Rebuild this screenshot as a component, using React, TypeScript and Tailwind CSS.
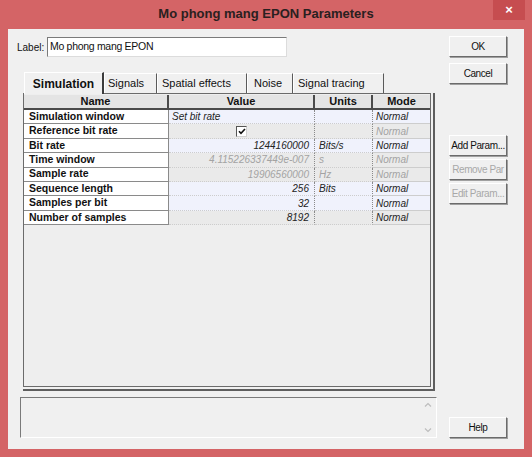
import React from 'react'

type Row = {
  name: string
  value: React.ReactNode
  align: 'left' | 'right' | 'center'
  units: string
  dim: boolean
  shade: boolean
}

const rows: Row[] = [
  { name: 'Simulation window', value: 'Set bit rate', align: 'left', units: '', dim: false, shade: false },
  { name: 'Reference bit rate', value: 'check', align: 'center', units: '', dim: true, shade: true },
  { name: 'Bit rate', value: '1244160000', align: 'right', units: 'Bits/s', dim: false, shade: false },
  { name: 'Time window', value: '4.115226337449e-007', align: 'right', units: 's', dim: true, shade: true },
  { name: 'Sample rate', value: '19906560000', align: 'right', units: 'Hz', dim: true, shade: true },
  { name: 'Sequence length', value: '256', align: 'right', units: 'Bits', dim: false, shade: false },
  { name: 'Samples per bit', value: '32', align: 'right', units: '', dim: false, shade: false },
  { name: 'Number of samples', value: '8192', align: 'right', units: '', dim: false, shade: true },
]

const tabs = [
  { label: 'Simulation', cls: 'w-[80px] justify-center' },
  { label: 'Signals', cls: 'w-[53px] pl-[3px]' },
  { label: 'Spatial effects', cls: 'w-[90px] pl-[4px]' },
  { label: 'Noise', cls: 'w-[46px] pl-[6px]' },
  { label: 'Signal tracing', cls: 'w-[91px] pl-[4px]' },
]

const font = { fontFamily: '"Liberation Sans", Arial, sans-serif' }

function WinButton({ label, disabled, className = '' }: { label: string; disabled?: boolean; className?: string }) {
  return (
    <div
      className={`w-[58px] h-[21px] flex items-center justify-center whitespace-nowrap bg-[#f0f0f0] border border-t-white border-l-white border-r-[#6b6b6b] border-b-[#6b6b6b] shadow-[1px_1px_0_#a0a0a0] text-[10px] tracking-[-0.4px] ${disabled ? 'text-[#a8a8a8]' : 'text-[#111]'} ${className}`}
    >
      {label}
    </div>
  )
}

function CheckBox() {
  return (
    <div className="w-[11px] h-[11px] bg-white border border-t-[#555] border-l-[#555] border-r-[#d0d0d0] border-b-[#d0d0d0] flex items-center justify-center">
      <svg width="8" height="7" viewBox="0 0 8 7">
        <path d="M1 3.2 L3 5.4 L7 1" fill="none" stroke="#111" strokeWidth="1.6" />
      </svg>
    </div>
  )
}

export default function App() {
  return (
    <div className="w-[532px] h-[457px] bg-[#d46466] flex flex-col overflow-hidden" style={font}>
      {/* title bar */}
      <div className="relative h-[29px] flex items-center justify-center">
        <span className="text-[13px] font-bold text-[#2a2020] pb-[1px]">Mo phong mang EPON Parameters</span>
        <div className="absolute right-[7px] top-0 w-[32px] h-[20px] bg-[#c64d50] flex items-center justify-center text-white text-[13px] font-bold">
          ×
        </div>
      </div>

      {/* client area */}
      <div className="mx-[8px] h-[420px] bg-[#f0f0f0] flex">
        {/* left column */}
        <div className="w-[433px] flex flex-col">
          <div className="mt-[8px] h-[20px] flex items-center">
            <span className="ml-[9px] w-[30px] text-[10px] text-[#111]">Label:</span>
            <div className="w-[240px] h-[20px] bg-white border border-t-[#7a7a7a] border-l-[#7a7a7a] border-r-[#dcdcdc] border-b-[#dcdcdc] flex items-center pl-[2px] text-[10.5px] tracking-[-0.3px] text-[#111]">
              Mo phong mang EPON
            </div>
          </div>

          {/* tabs */}
          <div className="mt-[14px] ml-[16px] h-[22px] flex items-end">
            {tabs.map((t, i) => (
              <div
                key={t.label}
                className={`${t.cls} ${i === 0 ? 'h-[22px] font-bold text-[12px] border-r-2 border-r-[#3c3c3c] mb-[-1px] bg-[#f0f0f0] relative z-10' : 'h-[20px] text-[11px] border-r border-r-[#5a5a5a]'} border-t border-l border-t-white border-l-white flex items-center text-[#111]`}
              >
                {t.label}
              </div>
            ))}
          </div>

          {/* tab panel */}
          <div className="ml-[15px] w-[412px] h-[298px] border-r-2 border-b-2 border-[#5e5e5e] pr-[2px] pb-[2px]">
            <div className="w-[408px] h-[294px] border border-[#6b6b6b] bg-[#eeeeee] flex flex-col">
              {/* header */}
              <div className="mt-[1px] h-[15px] flex text-[11px] font-bold text-[#111] border-b-2 border-[#4a4a4a]">
                <div className="w-[145px] bg-[#e4e4e4] border-r-2 border-[#4a4a4a] flex items-center justify-center">Name</div>
                <div className="w-[146px] bg-[#e4e4e4] border-r-2 border-[#4a4a4a] flex items-center justify-center">Value</div>
                <div className="w-[58px] bg-[#e4e4e4] border-r-2 border-[#4a4a4a] flex items-center justify-center">Units</div>
                <div className="flex-1 bg-[#e4e4e4] flex items-center justify-center">Mode</div>
              </div>

              {rows.map((r) => {
                const bg = r.shade ? 'bg-[#eaeaea]' : 'bg-[#f0f2fc]'
                const txt = r.dim ? 'text-[#a3a3a3]' : 'text-[#222]'
                return (
                  <div key={r.name} className="h-[14.4px] flex text-[10px]">
                    <div className="w-[145px] bg-white border-r border-b border-[#8a8a8a] flex items-center pl-[5px] font-bold text-[10.5px] text-[#111]">
                      {r.name}
                    </div>
                    <div
                      className={`w-[146px] ${bg} border-r border-dotted border-r-[#8a8a8a] border-b border-b-[#cdcdcd] flex items-center italic ${txt} ${
                        r.align === 'right' ? 'justify-end pr-[5px]' : r.align === 'center' ? 'justify-center' : 'pl-[3px]'
                      }`}
                    >
                      {r.value === 'check' ? <CheckBox /> : r.value}
                    </div>
                    <div className={`w-[58px] ${bg} border-r border-dotted border-r-[#8a8a8a] border-b border-b-[#cdcdcd] flex items-center pl-[4px] italic ${txt}`}>
                      {r.units}
                    </div>
                    <div className={`flex-1 ${bg} border-b border-b-[#cdcdcd] flex items-center pl-[3px] italic ${txt}`}>
                      Normal
                    </div>
                  </div>
                )
              })}
            </div>
          </div>

          {/* message box */}
          <div className="mt-[6px] ml-[12px] w-[417px] h-[41px] border border-t-[#7a7a7a] border-l-[#7a7a7a] border-r-white border-b-white bg-[#f0f0f0] flex justify-end">
            <div className="w-[16px] flex flex-col items-center justify-between py-[4px]">
              <svg width="8" height="5" viewBox="0 0 8 5">
                <path d="M1 4.5 L4 1.5 L7 4.5" fill="none" stroke="#bdbdbd" strokeWidth="1.2" />
              </svg>
              <svg width="8" height="5" viewBox="0 0 8 5">
                <path d="M1 0.5 L4 3.5 L7 0.5" fill="none" stroke="#bdbdbd" strokeWidth="1.2" />
              </svg>
            </div>
          </div>
        </div>

        {/* right column */}
        <div className="ml-[8px] flex flex-col pt-[7px] pb-[11px]">
          <WinButton label="OK" />
          <WinButton label="Cancel" className="mt-[6px]" />
          <WinButton label="Add Param..." className="mt-[51px]" />
          <WinButton label="Remove Par" disabled className="mt-[3px]" />
          <WinButton label="Edit Param..." disabled className="mt-[3px]" />
          <WinButton label="Help" className="mt-auto" />
        </div>
      </div>
    </div>
  )
}
